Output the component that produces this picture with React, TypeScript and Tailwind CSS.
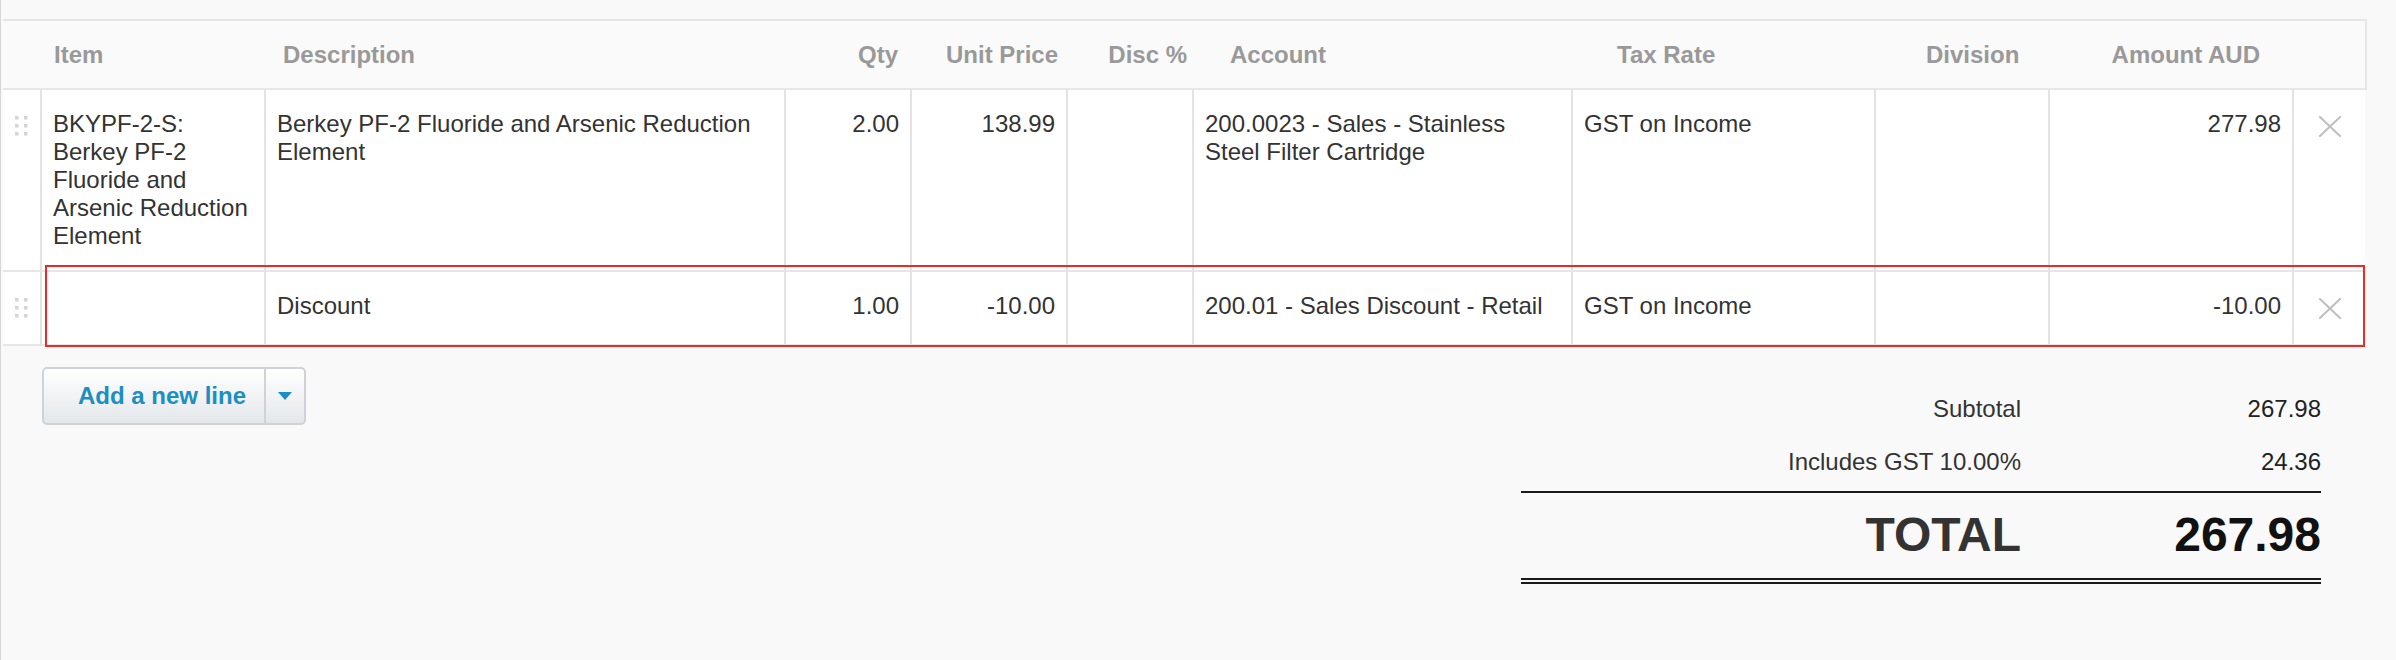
import React from "react";

type Line = {
  item: string;
  description: string;
  qty: string;
  price: string;
  disc: string;
  account: string;
  tax: string;
  division: string;
  amount: string;
};

const lines: Line[] = [
  {
    item: "BKYPF-2-S: Berkey PF-2 Fluoride and Arsenic Reduction Element",
    description: "Berkey PF-2 Fluoride and Arsenic Reduction Element",
    qty: "2.00",
    price: "138.99",
    disc: "",
    account: "200.0023 - Sales - Stainless Steel Filter Cartridge",
    tax: "GST on Income",
    division: "",
    amount: "277.98",
  },
  {
    item: "",
    description: "Discount",
    qty: "1.00",
    price: "-10.00",
    disc: "",
    account: "200.01 - Sales Discount - Retail",
    tax: "GST on Income",
    division: "",
    amount: "-10.00",
  },
];

const cols =
  "grid grid-cols-[39px_224px_520px_126px_156px_126px_379px_303px_174px_244px_71px]";

function DragHandle() {
  return (
    <svg width="13" height="20" viewBox="0 0 13 20" aria-hidden="true">
      {[0, 8, 16].map((y) => (
        <g key={y} fill="#d4d4d4">
          <rect x="0" y={y} width="3.5" height="3.5" />
          <rect x="9" y={y} width="3.5" height="3.5" />
        </g>
      ))}
    </svg>
  );
}

function RemoveIcon() {
  return (
    <svg width="22" height="21" viewBox="0 0 22 21" aria-hidden="true">
      <path d="M1 1 L21 20 M21 1 L1 20" stroke="#bfbfbf" strokeWidth="2" strokeLinecap="square" fill="none" />
    </svg>
  );
}

function Cell({
  children,
  right,
  last,
}: {
  children?: React.ReactNode;
  right?: boolean;
  last?: boolean;
}) {
  return (
    <div
      className={`px-[11px] pt-[20px] pb-[20px] ${last ? "" : "border-r-2 border-[#e3e3e3]"} ${
        right ? "text-right" : "text-left"
      }`}
    >
      {children}
    </div>
  );
}

export default function App() {
  return (
    <div className="min-h-[660px] w-full bg-[#f9f9f9] border-l border-[#d6d6d6] pt-[19px] pl-[2px] font-['Liberation_Sans',Arial,sans-serif] text-[24px] leading-[28px] text-[#333]">
      <div className="w-[2362px]">
        {/* column headings */}
        <div
          className={`${cols} w-[2364px] h-[71px] items-center border-2 border-l-0 border-[#e6e6e6] bg-[#fafafa] font-bold text-[#999]`}
        >
          <div />
          <div className="pl-[12px]">Item</div>
          <div className="pl-[17px]">Description</div>
          <div className="pr-[14px] text-right">Qty</div>
          <div className="pr-[10px] text-right">Unit Price</div>
          <div className="pr-[7px] text-right">Disc %</div>
          <div className="pl-[36px]">Account</div>
          <div className="pl-[44px]">Tax Rate</div>
          <div className="pl-[50px]">Division</div>
          <div className="pr-[34px] text-right">Amount AUD</div>
          <div />
        </div>

        {/* invoice lines */}
        {lines.map((l, i) => (
          <div
            key={i}
            className={`${cols} relative min-h-[74px] border-b-2 border-[#e6e6e6] bg-white`}
          >
            <div className="flex justify-center border-r-2 border-[#e3e3e3] pt-[26px]">
              <DragHandle />
            </div>
            <Cell>{l.item}</Cell>
            <Cell>{l.description}</Cell>
            <Cell right>{l.qty}</Cell>
            <Cell right>{l.price}</Cell>
            <Cell right>{l.disc}</Cell>
            <Cell>{l.account}</Cell>
            <Cell>{l.tax}</Cell>
            <Cell>{l.division}</Cell>
            <Cell right>{l.amount}</Cell>
            <div className="flex justify-center pt-[26px]">
              <RemoveIcon />
            </div>
            {i === 1 && (
              <div className="pointer-events-none absolute left-[42px] right-0 top-[-7px] bottom-[-3px] border-2 border-[#ee2a24]" />
            )}
          </div>
        ))}
      </div>

      <div className="flex items-start justify-between pl-[39px] pr-[75px]">
        {/* add line split button */}
        <div className="mt-[21px] flex h-[58px] rounded-[5px] border-2 border-[#cfd3d7] bg-linear-to-b from-[#ffffff] to-[#e4e7ea]">
          <button className="pl-[34px] pr-[18px] font-bold text-[#1b8ec2]">Add a new line</button>
          <div className="w-[2px] bg-[#cfd3d7]" />
          <div className="flex w-[38px] items-center justify-center">
            <svg width="14" height="8" viewBox="0 0 14 8" aria-hidden="true">
              <path d="M0 0 H14 L7 8 Z" fill="#1b8ec2" />
            </svg>
          </div>
        </div>

        {/* totals */}
        <div className="mt-[49px] w-[800px]">
          <div className="border-b-2 border-[#1a1a1a] pb-[15px]">
            <div className="grid grid-cols-[500px_300px]">
              <div className="text-right">Subtotal</div>
              <div className="text-right text-[#222]">267.98</div>
            </div>
            <div className="mt-[25px] grid grid-cols-[500px_300px]">
              <div className="text-right">Includes GST 10.00%</div>
              <div className="text-right text-[#222]">24.36</div>
            </div>
          </div>
          <div className="grid grid-cols-[500px_300px] border-b-[6px] border-double border-[#1a1a1a] pt-[14px] pb-[15px] text-[48px] leading-[56px] font-bold">
            <div className="text-right text-[#333]">TOTAL</div>
            <div className="text-right text-[#111]">267.98</div>
          </div>
        </div>
      </div>
    </div>
  );
}
